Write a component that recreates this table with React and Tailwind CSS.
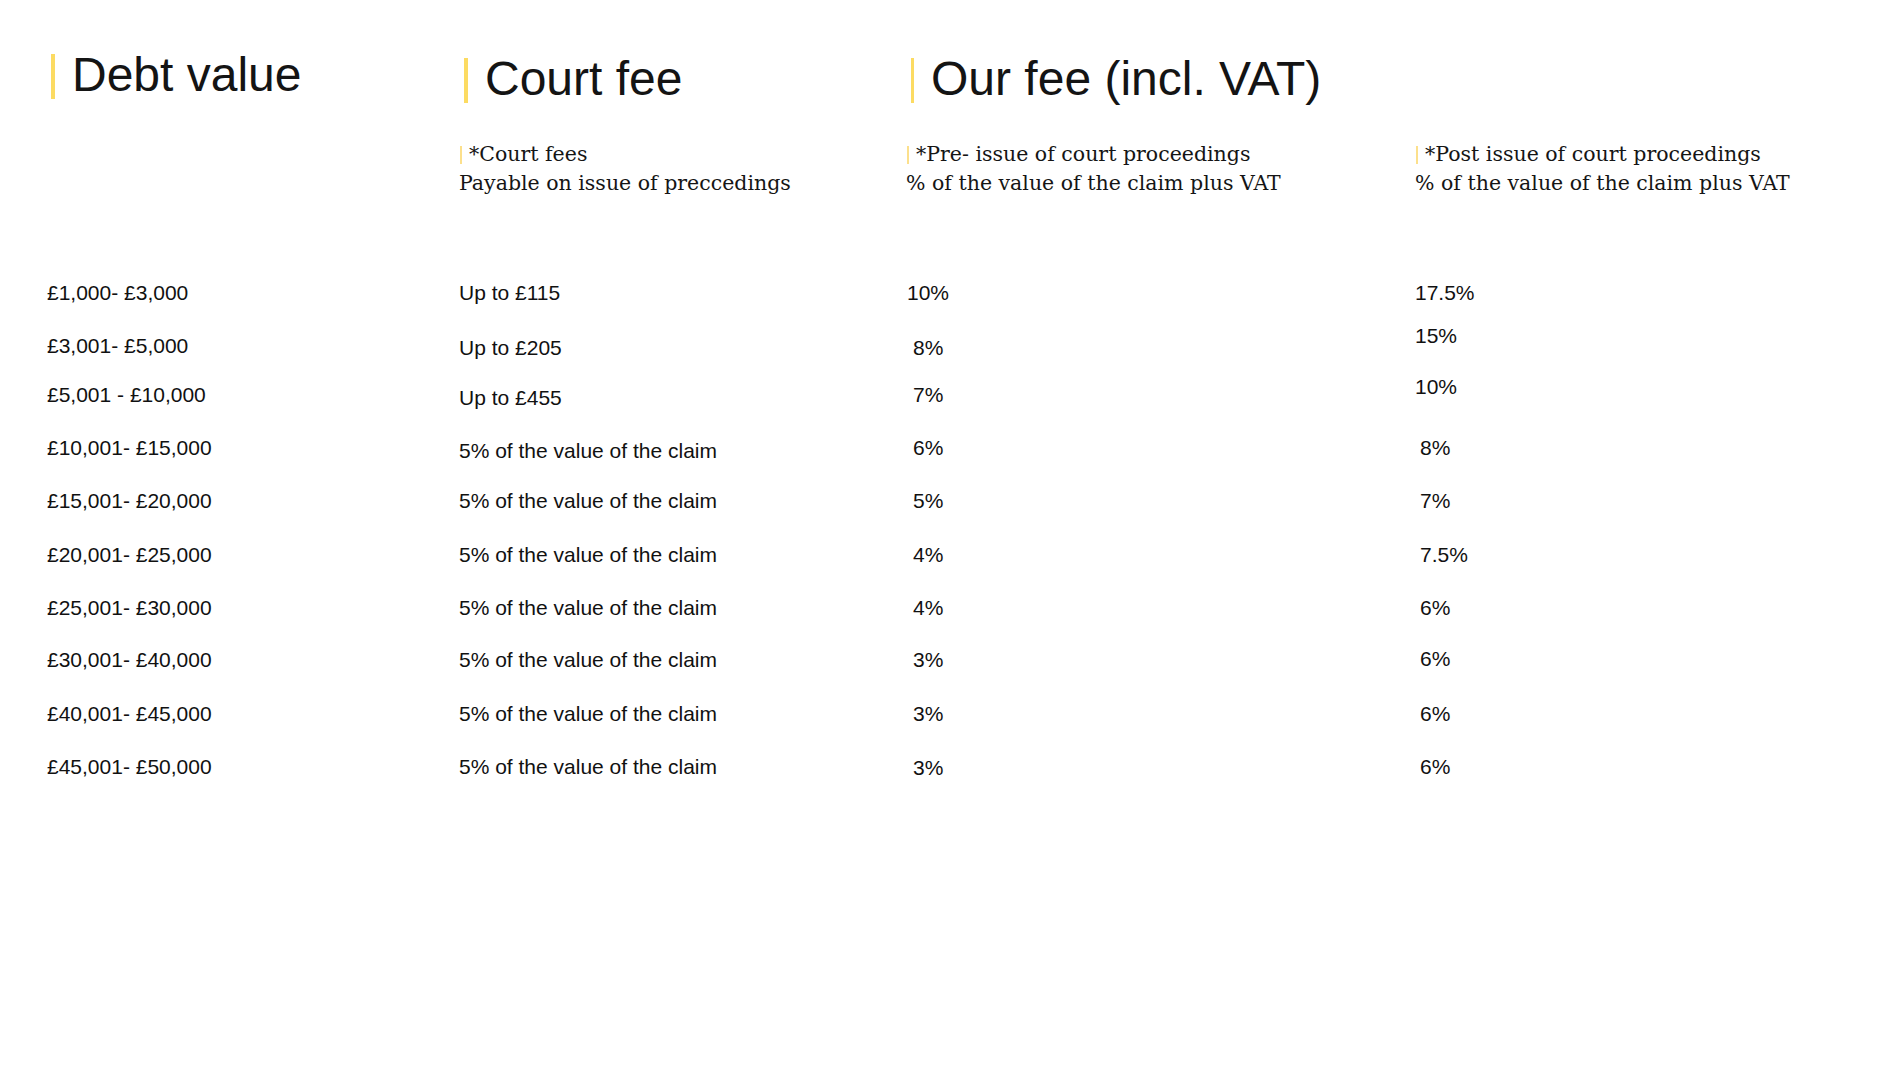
import React from 'react';

const sans = { fontFamily: '"Liberation Sans", Arial, sans-serif' };

// each row: height of the row, then cells as [text, extra classes]
const rows = [
  { h: 'h-[53px]', cells: [['£1,000- £3,000', ''], ['Up to £115', ''], ['10%', 'pl-[1px]'], ['17.5%', '']] },
  { h: 'h-[49px]', cells: [['£3,001- £5,000', ''], ['Up to £205', 'mt-[2px]'], ['8%', 'mt-[2px] pl-[7px]'], ['15%', '-mt-[10px]']] },
  { h: 'h-[53px]', cells: [['£5,001 - £10,000', ''], ['Up to £455', 'mt-[3px]'], ['7%', 'pl-[7px]'], ['10%', '-mt-[8px]']] },
  { h: 'h-[53px]', cells: [['£10,001- £15,000', ''], ['5% of the value of the claim', 'mt-[3px]'], ['6%', 'pl-[7px]'], ['8%', 'pl-[5px]']] },
  { h: 'h-[54px]', cells: [['£15,001- £20,000', ''], ['5% of the value of the claim', ''], ['5%', 'pl-[7px]'], ['7%', 'pl-[5px]']] },
  { h: 'h-[53px]', cells: [['£20,001- £25,000', ''], ['5% of the value of the claim', ''], ['4%', 'pl-[7px]'], ['7.5%', 'pl-[5px]']] },
  { h: 'h-[52px]', cells: [['£25,001- £30,000', ''], ['5% of the value of the claim', ''], ['4%', 'pl-[7px]'], ['6%', 'pl-[5px]']] },
  { h: 'h-[54px]', cells: [['£30,001- £40,000', ''], ['5% of the value of the claim', ''], ['3%', 'pl-[7px]'], ['6%', 'pl-[5px] -mt-[1px]']] },
  { h: 'h-[53px]', cells: [['£40,001- £45,000', ''], ['5% of the value of the claim', ''], ['3%', 'pl-[7px]'], ['6%', 'pl-[5px]']] },
  { h: 'h-[24px]', cells: [['£45,001- £50,000', ''], ['5% of the value of the claim', ''], ['3%', 'pl-[7px] mt-[1px]'], ['6%', 'pl-[5px]']] },
];

function Title({ children, bar, className = '' }) {
  return (
    <div className={`flex items-start gap-[17px] ${className}`}>
      <div className={`${bar} h-[45px] bg-[#fcdb62]`} />
      <h1 className="text-[48px] leading-none text-[#141414] -mt-[3px]" style={sans}>{children}</h1>
    </div>
  );
}

function SubHead({ first, second, barMl, gap, lineTwoPl }) {
  return (
    <div className="text-[20.5px] leading-[29px] text-[#151515]" style={{ fontFamily: '"DejaVu Serif", Georgia, serif' }}>
      <div className="flex items-center h-[29px]">
        <span className={`${barMl} ${gap} w-[2px] h-[18px] bg-[#fce08c]`} />
        <span>{first}</span>
      </div>
      <div className={lineTwoPl}>{second}</div>
    </div>
  );
}

export default function App() {
  return (
    <div className="min-h-screen w-full bg-white pl-[47px] pt-[54px]">
      {/* column titles */}
      <div className="grid grid-cols-[412px_447px_1fr] h-[86px]">
        <Title bar="w-[4px] ml-[4px]">Debt value</Title>
        <Title bar="w-[4px] ml-[5px]" className="mt-[4px]">Court fee</Title>
        <Title bar="w-[3px] ml-[5px]" className="mt-[4px]">Our fee (incl. VAT)</Title>
      </div>

      {/* explanations */}
      <div className="grid grid-cols-[412px_447px_509px_1fr]">
        <div />
        <SubHead first="*Court fees" second="Payable on issue of preccedings" barMl="ml-[1px]" gap="mr-[7px]" lineTwoPl="" />
        <SubHead first="*Pre- issue of court proceedings" second="% of the value of the claim plus VAT" barMl="ml-[1px]" gap="mr-[7px]" lineTwoPl="" />
        <SubHead first="*Post issue of court proceedings" second="% of the value of the claim plus VAT" barMl="ml-[1px]" gap="mr-[7px]" lineTwoPl="" />
      </div>

      {/* fee table */}
      <div className="mt-[83px] flex flex-col text-[21px] leading-[24px] text-[#111]" style={sans}>
        {rows.map((row, i) => (
          <div key={i} className={`grid grid-cols-[412px_447px_509px_1fr] ${row.h}`}>
            {row.cells.map(([text, cls], j) => (
              <div key={j} className={cls}>{text}</div>
            ))}
          </div>
        ))}
      </div>
    </div>
  );
}
